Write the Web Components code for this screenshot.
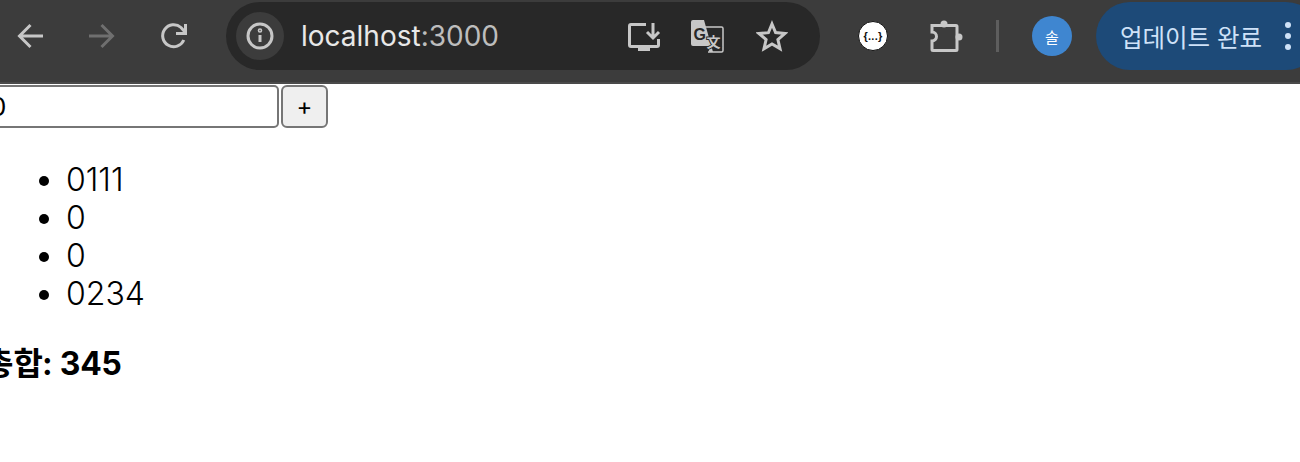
<!DOCTYPE html>
<html lang="ko">
<head>
<meta charset="utf-8">
<title>localhost:3000</title>
<style>
    html, body { margin: 0; padding: 0; background: #fff; overflow: hidden; }
    body { width: 1300px; height: 462px; font-family: Inter, "Noto Sans CJK KR", sans-serif; }
</style>
</head>
<body>
<browser-toolbar url-host="localhost" url-port=":3000"></browser-toolbar>
<sum-page></sum-page>

<script>
const ICONS = {
    back: '<path d="M15.500 5 4.500 16l11 11M5.500 16H28" />',
    forward: '<path d="M16.500 5l11 11-11 11M26.500 16H4" />',
    reload: '<path d="M25.800 20A11 11 0 1 1 23 7.500L27 12" /><path d="M27.500 4v9.500H18" />',
    info: '<circle cx="16" cy="16" r="12" /><path d="M16 15v7" /><circle cx="16" cy="10.500" r=".8" />',
    install: '<path d="M20 6.500H5A1.500 1.500 0 0 0 3.500 8v19A1.500 1.500 0 0 0 5 28.500h26a1.500 1.500 0 0 0 1.500-1.500v-6" /><path d="M27 5v14M21 14l6 6 6-6" /><path d="M12 29h12v4H12z" fill="currentColor" stroke="none" />',
    star: '<path d="M16 4l3.600 8.600 9.400.800-7.100 6.100 2.100 9.100L16 23.900l-8 4.800 2.100-9.100-7.100-6.100 9.400-.800z" />',
    puzzle: '<path d="M3 6.500h24a1 1 0 0 1 1 1v23a1 1 0 0 1-1 1H4a1 1 0 0 1-1-1V22a4.500 4.500 0 0 0 0-9z" /><circle cx="15" cy="5" r="3.500" fill="currentColor" stroke="none" /><circle cx="30" cy="18" r="3.500" fill="currentColor" stroke="none" />'
};

class ToolIcon extends HTMLElement {
    connectedCallback() {
        const name = this.getAttribute('name');
        const size = this.getAttribute('size') || 32;
        this.attachShadow({ mode: 'open' });
        this.shadowRoot.innerHTML = `
            <style>
                :host { display: inline-flex; flex: none; align-items: center; justify-content: center; color: #c7c7c7; }
                svg { fill: none; stroke: currentColor; stroke-width: 3; display: block; }
            </style>
            <svg width="${size}" height="${size}" viewBox="0 0 ${size} ${size}">${ICONS[name]}</svg>
        `;
    }
}

class TranslateIcon extends HTMLElement {
    constructor() {
        super();
        this.attachShadow({ mode: 'open' });
        this.shadowRoot.innerHTML = `
            <style>
                :host { display: inline-flex; flex: none; width: 34px; height: 34px; }
                svg { display: block; }
                text { font-family: "Liberation Sans", "Noto Sans CJK SC", sans-serif; font-weight: 700; }
            </style>
            <svg width="34" height="34" viewBox="0 0 34 34">
                <path d="M14 8h17.500a1.500 1.500 0 0 1 1.500 1.500v22a1.500 1.500 0 0 1-1.500 1.500H18" fill="#282828" stroke="#c7c7c7" stroke-width="1.500" />
                <path d="M3 1h11l9 32h-3.500l-2.500-6H3a2 2 0 0 1-2-2V3a2 2 0 0 1 2-2z" fill="#c7c7c7" />
                <text x="3.500" y="20.500" font-size="16" fill="#282828">G</text>
                <text x="16.500" y="28" font-size="14" fill="#c7c7c7" stroke="#282828" stroke-width="2" paint-order="stroke">文</text>
            </svg>
        `;
    }
}

class ExtensionBadge extends HTMLElement {
    constructor() {
        super();
        this.attachShadow({ mode: 'open' });
        this.shadowRoot.innerHTML = `
            <style>
                :host {
                    display: inline-flex; flex: none; align-items: center; justify-content: center;
                    width: 30px; height: 30px; border-radius: 50%;
                    background: #fff; border: 1.500px solid #111; box-sizing: border-box;
                    color: #111; font: 700 11px "Liberation Sans", sans-serif; letter-spacing: .3px;
                }
            </style>
            <span>{...}</span>
        `;
    }
}

class BrowserToolbar extends HTMLElement {
    constructor() {
        super();
        this.attachShadow({ mode: 'open' });
    }

    connectedCallback() {
        this.render();
    }

    render() {
        const host = this.getAttribute('url-host');
        const port = this.getAttribute('url-port');
        this.shadowRoot.innerHTML = `
            <style>
                :host {
                    display: flex; align-items: flex-start; box-sizing: border-box;
                    height: 84px; padding: 2px 0 0 15px;
                    background: #3c3c3c; border-bottom: 2px solid #4a4a4a; overflow: hidden;
                }
                .nav { display: flex; flex: none; align-items: center; width: 211px; height: 68px; }
                .nav tool-icon + tool-icon { margin-left: 38px; }
                .nav tool-icon:last-child { margin-left: 41px; }
                .dim { color: #6f6f6f; }
                .omnibox {
                    display: flex; flex: none; align-items: center; box-sizing: border-box;
                    width: 594px; height: 68px; padding: 0 32px 0 10px;
                    background: #282828; border-radius: 34px;
                }
                .info {
                    display: flex; flex: none; align-items: center; justify-content: center;
                    width: 48px; height: 48px; border-radius: 50%; background: #3c3c3c;
                }
                .url {
                    margin-left: 17px; flex: 1;
                    font: 400 28px Inter, sans-serif; color: #e8e8e8;
                }
                .url span { color: #bdbdbd; }
                .actions { display: flex; flex: none; gap: 28px; align-items: center; }
                .actions tool-icon:last-child { margin-left: 4px; }
                .ext { display: flex; flex: none; align-items: center; height: 68px; margin-left: 38px; gap: 41px; }
                .sep { width: 3px; height: 32px; margin-left: -8px; background: #5e5e5e; }
                .avatar {
                    display: flex; flex: none; align-items: center; justify-content: center;
                    width: 40px; height: 40px; margin: 14px 0 0 33px; border-radius: 50%;
                    background: #3f86d0; color: #fff; font: 400 15px "Noto Sans CJK KR", sans-serif;
                }
                .update {
                    display: flex; flex: none; align-items: center; box-sizing: border-box;
                    width: 224px; height: 68px; margin-left: 24px; padding-left: 24px;
                    border-radius: 34px; background: #1d4a78; color: #cfe2f8;
                    font: 400 24.500px "Noto Sans CJK KR", sans-serif; white-space: nowrap;
                }
                .dots { display: flex; flex-direction: column; gap: 5px; margin-left: 23px; }
                .dots i { width: 6px; height: 6px; border-radius: 50%; background: #cfe2f8; }
            </style>
            <div class="nav">
                <tool-icon name="back"></tool-icon>
                <tool-icon name="forward" class="dim"></tool-icon>
                <tool-icon name="reload"></tool-icon>
            </div>
            <div class="omnibox">
                <div class="info"><tool-icon name="info"></tool-icon></div>
                <div class="url">${host}<span>${port}</span></div>
                <div class="actions">
                    <tool-icon name="install" size="36"></tool-icon>
                    <translate-icon></translate-icon>
                    <tool-icon name="star"></tool-icon>
                </div>
            </div>
            <div class="ext">
                <extension-badge></extension-badge>
                <tool-icon name="puzzle" size="34"></tool-icon>
                <div class="sep"></div>
            </div>
            <div class="avatar">솔</div>
            <div class="update">업데이트 완료<div class="dots"><i></i><i></i><i></i></div></div>
        `;
    }
}

class SumPage extends HTMLElement {
    constructor() {
        super();
        this.attachShadow({ mode: 'open' });
        this.items = ['0111', '0', '0', '0234'];
        this.total = 345;
    }

    connectedCallback() {
        this.render();
    }

    render() {
        this.shadowRoot.innerHTML = `
            <style>
                :host {
                    display: block; margin-left: -16px; padding-top: 1px;
                    font: 400 31px Inter, "Noto Sans CJK KR", sans-serif; color: #000;
                }
                .form { display: flex; gap: 2px; align-items: stretch; height: 43px; }
                input {
                    box-sizing: border-box; width: 295px; height: 43px; padding: 0 4px;
                    border: 2px solid #767676; border-radius: 5px; outline: none;
                    font: 400 26px Inter, sans-serif; color: #000; background: #fff;
                }
                button {
                    box-sizing: border-box; width: 47px; height: 43px; padding: 0;
                    border: 2px solid #767676; border-radius: 6px; background: #efefef;
                    font: 400 24px Inter, sans-serif; color: #000;
                }
                ul { margin: 33px 0 0; padding: 0 0 0 82px; font-size: 32px; line-height: 38px; font-weight: 300; }
                .total {
                    margin: 32px 0 0 0; font-weight: 700; font-size: 32px; line-height: 38px;
                    font-variant-numeric: tabular-nums;
                }
            </style>
            <div class="form">
                <input value="0">
                <button>+</button>
            </div>
            <ul>${this.items.map(item => `<li>${item}</li>`).join('')}</ul>
            <p class="total">총합: ${this.total}</p>
        `;
    }
}

customElements.define('tool-icon', ToolIcon);
customElements.define('translate-icon', TranslateIcon);
customElements.define('extension-badge', ExtensionBadge);
customElements.define('browser-toolbar', BrowserToolbar);
customElements.define('sum-page', SumPage);
</script>
</body>
</html>
